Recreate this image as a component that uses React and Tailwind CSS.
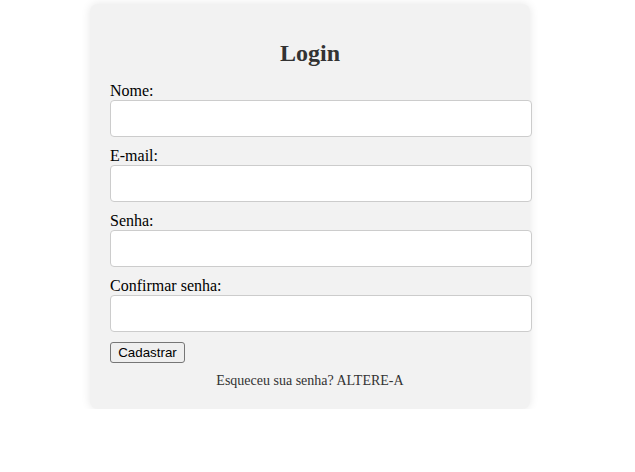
export default function App() {
  const fields = ["Nome:", "E-mail:", "Senha:", "Confirmar senha:"];
  return (
    <div className="w-[620px] bg-white font-['Liberation_Serif',serif] text-black">
      <div className="mx-auto mt-[4px] w-[440px] rounded-[8px] bg-[#f2f2f2] p-[20px] shadow-[0_0_10px_rgba(0,0,0,0.1)]">
        <h2 className="mt-[16px] mb-[15px] text-center text-[24px] leading-[27px] font-bold text-[#333]">
          Login
        </h2>
        {fields.map((f) => (
          <div key={f}>
            <label className="block text-[16px] leading-[18px]">{f}</label>
            <input
              type="text"
              className="mb-[10px] block h-[37px] w-[422px] rounded-[4px] border border-[#ccc] bg-white px-[10px] outline-none"
            />
          </div>
        ))}
        <button className="flex h-[21px] w-[75px] items-center justify-center rounded-[3px] border border-[#767676] bg-[#efefef] font-['Liberation_Sans',sans-serif] text-[13.33px] leading-[15px] text-black">
          Cadastrar
        </button>
        <p className="mt-[10px] text-center text-[14px] leading-[16px] text-[#333]">
          Esqueceu sua senha? ALTERE-A
        </p>
      </div>
    </div>
  );
}
